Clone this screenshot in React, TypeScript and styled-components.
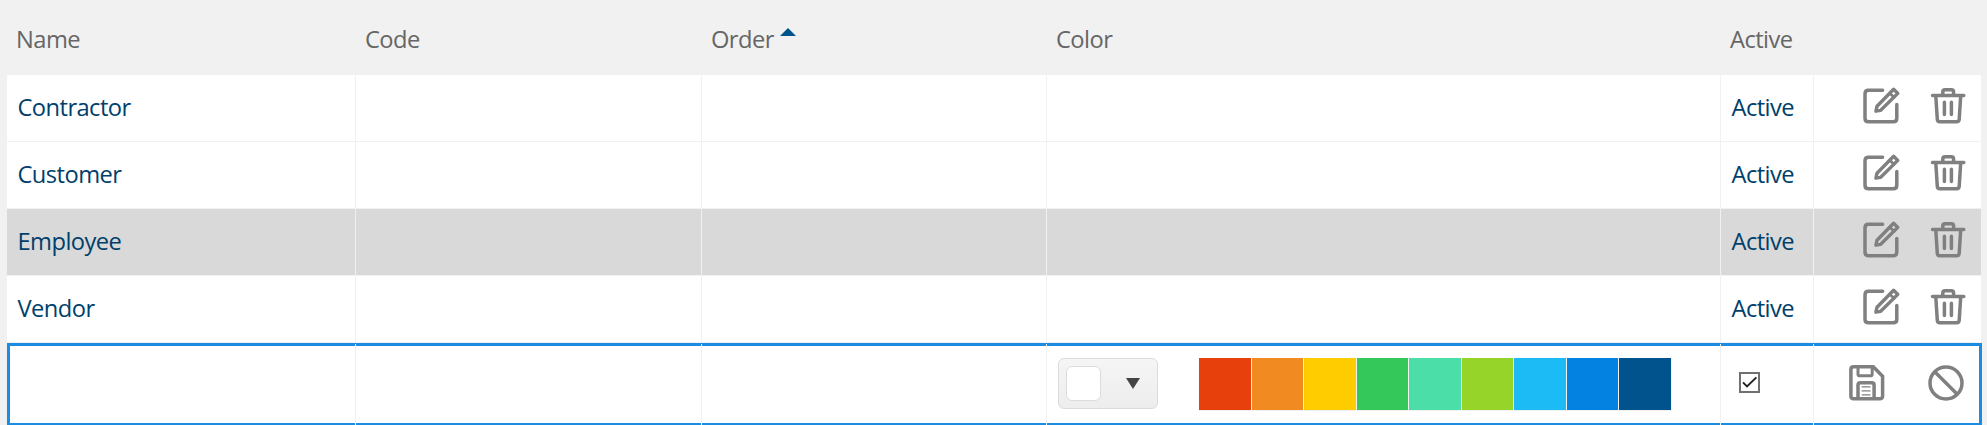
import React from 'react';
import styled, { createGlobalStyle } from 'styled-components';

const GlobalStyle = createGlobalStyle`
  * { box-sizing: border-box; }
  body {
    margin: 0;
    overflow: hidden;
    background: #f1f1f1;
    font-family: "Open Sans", "Noto Sans", sans-serif;
  }
`;

const Grid = styled.div`
  width: 1987px;
  height: 425px;
  padding: 0 5px 0 7px;
  overflow: hidden;
  font-size: 23.7px;
  letter-spacing: -0.56px;
  line-height: 32px;
`;

const columns = '349px 346px 345px 674px 93px 168px';

const Header = styled.div`
  display: grid;
  grid-template-columns: ${columns};
  align-items: center;
  height: 75px;
  padding-top: 3px;
  color: #666;
`;

const HeaderCell = styled.div`
  display: flex;
  align-items: center;
  padding-left: 9px;
`;

const SortArrow = styled.svg`
  width: 16px;
  height: 8px;
  margin: -14px 0 0 6px;
`;

const Row = styled.div<{ $selected?: boolean }>`
  display: grid;
  grid-template-columns: ${columns};
  width: 1974px;
  height: 67px;
  overflow: hidden;
  background: ${(p) => (p.$selected ? '#d9d9d9' : '#fff')};
  border-bottom: 1px solid #f1f1f1;
  color: #00406b;
`;

const Cell = styled.div`
  display: flex;
  align-items: center;
  padding: 0 0 2px 10.5px;
  border-right: 1px solid #f1f1f1;
`;

const ActionsCell = styled.div<{ $start: number; $gap: number }>`
  display: flex;
  align-items: flex-start;
  gap: ${(p) => p.$gap}px;
  padding: 9px 0 0 ${(p) => p.$start}px;
`;

const EditRow = styled.div`
  display: grid;
  grid-template-columns: 346px 346px 345px 674px 93px 165px;
  width: 1975px;
  height: 83px;
  background: #fff;
  border: 3px solid #1c8ce3;
`;

const EditCell = styled.div`
  display: flex;
  align-items: flex-start;
  margin: -2px 0;
  border-right: 1px solid #f1f1f1;
`;

const ColorCell = styled(EditCell)`
  padding: 14px 0 0 11px;
  gap: 41px;
`;

const CheckCell = styled(EditCell)`
  padding: 28px 0 0 18px;
`;

const EditActions = styled(ActionsCell)`
  padding-top: 15px;
`;

const PickerButton = styled.button`
  display: flex;
  align-items: center;
  justify-content: space-between;
  width: 100px;
  height: 51px;
  padding: 0 17px 0 7px;
  border: 1px solid #dcdcdc;
  border-radius: 6px;
  background: linear-gradient(#f5f5f5, #ededed);
`;

const PickerValue = styled.span`
  width: 35px;
  height: 35px;
  border: 1px solid #dcdcdc;
  border-radius: 6px;
  background: #fff;
`;

const Palette = styled.div`
  display: flex;
`;

const Swatch = styled.div<{ $color: string }>`
  width: 52.5px;
  height: 53px;
  border: solid #f1f1f1;
  border-width: 0 1px 1px 0;
  background: ${(p) => p.$color};
`;

const CheckBox = styled.div`
  display: flex;
  width: 21px;
  height: 21px;
  border: 2px solid #707070;
  background: #fff;
`;

const Icon = styled.svg`
  flex: none;
  width: 44px;
  height: 44px;
  fill: none;
  stroke: #808080;
  stroke-width: 3.5;
  stroke-linecap: round;
  stroke-linejoin: round;
`;

const EditIcon = () => (
  <Icon viewBox="0 0 44 44">
    <path d="M22.6 6.2H8.5Q5 6.2 5 9.7V34.2Q5 37.7 8.5 37.7H33.3Q36.8 37.7 36.8 34.2V20.6" />
    <path d="M33.6 5.2L37.8 9.4L20.7 26.3L15.9 27.2L17 22.2Z" strokeWidth="3.4" />
    <path d="M29.8 9.2L34 13.2" strokeWidth="2.8" />
  </Icon>
);

const TrashIcon = () => (
  <Icon viewBox="0 0 44 44">
    <path d="M6.5 11.4H37.8M16.8 11V8Q16.8 5.8 19 5.8H25.4Q27.6 5.8 27.6 8V11" />
    <path d="M9.8 12L11.3 35.4Q11.5 37.8 13.9 37.8H30.6Q33 37.8 33.2 35.4L34.7 12" />
    <path d="M18.4 18.3V30.6M25.4 18.3V30.6" />
  </Icon>
);

const SaveIcon = () => (
  <Icon viewBox="0 0 44 44">
    <path d="M8.6 5.7H28.3L37.6 15.2V35Q37.6 37.7 34.9 37.7H8.6Q5.9 37.7 5.9 35V8.4Q5.9 5.7 8.6 5.7Z" />
    <path d="M13 6V13.2Q13 14.8 14.6 14.8H25.6Q27.2 14.8 27.2 13.2V6" strokeWidth="3" />
    <path d="M13 37V24Q13 21.7 15.3 21.7H26.8Q29.1 21.7 29.1 24V37" />
    <path d="M17.2 25.9H25M17.2 29.9H25M17.2 33.9H25" strokeWidth="1.4" />
  </Icon>
);

const CancelIcon = () => (
  <Icon viewBox="0 0 44 44">
    <circle cx="22" cy="22" r="16" />
    <path d="M11 11L33 33" />
  </Icon>
);

const names = ['Contractor', 'Customer', 'Employee', 'Vendor'];

const palette = [
  '#e8400c', '#f28a22', '#ffcc00', '#34c759', '#4bdea8',
  '#96d429', '#1dbbf6', '#0482e2', '#00538c',
];

export default function App() {
  return (
    <>
      <GlobalStyle />
      <Grid>
        <Header>
          <HeaderCell>Name</HeaderCell>
          <HeaderCell>Code</HeaderCell>
          <HeaderCell>
            Order
            <SortArrow viewBox="0 0 16 8">
              <path d="M8 0L16 8H0Z" fill="#00538c" />
            </SortArrow>
          </HeaderCell>
          <HeaderCell>Color</HeaderCell>
          <HeaderCell>Active</HeaderCell>
        </Header>
        {names.map((name) => (
          <Row key={name} $selected={name === 'Employee'}>
            <Cell>{name}</Cell>
            <Cell />
            <Cell />
            <Cell />
            <Cell>Active</Cell>
            <ActionsCell $start={46} $gap={22}>
              <EditIcon />
              <TrashIcon />
            </ActionsCell>
          </Row>
        ))}
        <EditRow>
          <EditCell />
          <EditCell />
          <EditCell />
          <ColorCell>
            <PickerButton>
              <PickerValue />
              <svg width="14" height="11" viewBox="0 0 14 11">
                <path d="M0 0H14L7 11Z" fill="#444" />
              </svg>
            </PickerButton>
            <Palette>
              {palette.map((color) => (
                <Swatch key={color} $color={color} />
              ))}
            </Palette>
          </ColorCell>
          <CheckCell>
            <CheckBox>
              <svg width="17" height="17" viewBox="0 0 17 17">
                <path d="M2 8.4L6 12.4L15.4 3.4" fill="none" stroke="#222" strokeWidth="2" />
              </svg>
            </CheckBox>
          </CheckCell>
          <EditActions $start={31} $gap={35}>
            <SaveIcon />
            <CancelIcon />
          </EditActions>
        </EditRow>
      </Grid>
    </>
  );
}
